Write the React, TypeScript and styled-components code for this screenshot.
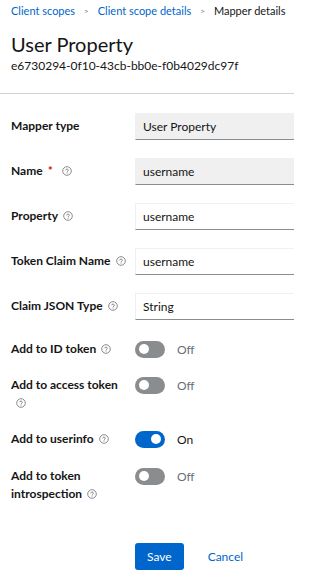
import React from 'react';
import styled, { createGlobalStyle } from 'styled-components';

const GlobalStyle = createGlobalStyle`
  body {
    margin: 0;
    background: #fff;
    font-family: Lato, "Liberation Sans", sans-serif;
    color: #151515;
    overflow: hidden;
  }
`;

const Page = styled.div`
  width: 294px;
  height: 577px;
  overflow: hidden;
`;

const Header = styled.div`
  padding: 3px 11px 19px;
  border-bottom: 1px solid #d2d2d2;
`;

const Breadcrumb = styled.nav`
  display: flex;
  align-items: center;
  gap: 9px;
  font-size: 11px;
  line-height: 16px;
  white-space: nowrap;
`;

const Crumb = styled.a<{ $current?: boolean }>`
  color: ${(p) => (p.$current ? '#151515' : '#0066cc')};
  text-decoration: none;
`;

const Sep = styled.span`
  color: #6a6e73;
  font-size: 8px;
`;

const Title = styled.h1`
  margin: 13px 0 0;
  font-size: 20px;
  font-weight: 400;
  line-height: 24px;
`;

const SubId = styled.div`
  font-size: 12px;
  line-height: 16px;
  margin-top: 2px;
`;

const Form = styled.form`
  padding: 19px 0 0 11px;
  display: flex;
  flex-direction: column;
`;

const Row = styled.div<{ $gap?: number }>`
  display: grid;
  grid-template-columns: 124px 1fr;
  align-items: start;
  margin-bottom: ${(p) => p.$gap ?? 18}px;
`;

const Label = styled.label<{ $top?: number }>`
  font-size: 12px;
  font-weight: 700;
  line-height: 18px;
  padding-top: ${(p) => p.$top ?? 4}px;
  padding-right: 6px;
`;

const Req = styled.span`
  color: #c9190b;
  margin: 0 4px 0 5px;
`;

const Help = styled.span`
  display: inline-flex;
  vertical-align: middle;
  margin-left: 5px;
  margin-top: -2px;
`;

const Input = styled.input<{ $readOnly?: boolean }>`
  box-sizing: border-box;
  width: calc(100% + 12px);
  height: 27px;
  padding: 0 7px;
  font: inherit;
  font-size: 12px;
  color: #151515;
  background: ${(p) => (p.$readOnly ? '#f0f0f0' : '#fff')};
  border: 1px solid #f0f0f0;
  border-bottom-color: #8a8d90;
  outline: none;
`;

const SwitchWrap = styled.div`
  display: flex;
  align-items: center;
  gap: 12px;
  height: 22px;
`;

const Track = styled.span<{ $on: boolean }>`
  position: relative;
  width: 30px;
  height: 17px;
  border-radius: 9px;
  background: ${(p) => (p.$on ? '#0066cc' : '#8a8d90')};
`;

const Knob = styled.span<{ $on: boolean }>`
  position: absolute;
  top: 3.5px;
  left: ${(p) => (p.$on ? '16px' : '4px')};
  width: 10px;
  height: 10px;
  border-radius: 50%;
  background: #fff;
`;

const SwitchText = styled.span<{ $on: boolean }>`
  font-size: 12px;
  color: ${(p) => (p.$on ? '#151515' : '#6a6e73')};
`;

const Actions = styled.div`
  display: flex;
  align-items: center;
  gap: 24px;
  margin-top: 40px;
  padding-left: 124px;
`;

const Primary = styled.button`
  height: 27px;
  padding: 0 12px;
  border: none;
  border-radius: 3px;
  background: #0066cc;
  color: #fff;
  font: inherit;
  font-size: 12px;
`;

const LinkButton = styled.button`
  border: none;
  background: none;
  padding: 0;
  color: #0066cc;
  font: inherit;
  font-size: 12px;
`;

const HelpIcon = () => (
  <Help>
    <svg width="10" height="10" viewBox="0 0 20 20" fill="none" stroke="#6a6e73" strokeWidth="1.6">
      <circle cx="10" cy="10" r="8.6" />
      <path d="M7.4 7.8a2.7 2.7 0 0 1 5.2 0.7c0 1.8-2.6 2.2-2.6 3.8" strokeLinecap="round" />
      <circle cx="10" cy="14.6" r="0.9" fill="#6a6e73" stroke="none" />
    </svg>
  </Help>
);

const Switch = ({ on }: { on: boolean }) => (
  <SwitchWrap>
    <Track $on={on}>
      <Knob $on={on} />
    </Track>
    <SwitchText $on={on}>{on ? 'On' : 'Off'}</SwitchText>
  </SwitchWrap>
);

const App = () => {
  return (
    <Page>
      <GlobalStyle />
      <Header>
        <Breadcrumb>
          <Crumb>Client scopes</Crumb>
          <Sep>&gt;</Sep>
          <Crumb>Client scope details</Crumb>
          <Sep>&gt;</Sep>
          <Crumb $current>Mapper details</Crumb>
        </Breadcrumb>
        <Title>User Property</Title>
        <SubId>e6730294-0f10-43cb-bb0e-f0b4029dc97f</SubId>
      </Header>
      <Form>
        <Row>
          <Label>Mapper type</Label>
          <Input $readOnly readOnly value="User Property" />
        </Row>
        <Row>
          <Label>
            Name<Req>*</Req>
            <HelpIcon />
          </Label>
          <Input $readOnly readOnly value="username" />
        </Row>
        <Row>
          <Label>
            Property
            <HelpIcon />
          </Label>
          <Input readOnly value="username" />
        </Row>
        <Row>
          <Label>
            Token Claim Name
            <HelpIcon />
          </Label>
          <Input readOnly value="username" />
        </Row>
        <Row $gap={18}>
          <Label>
            Claim JSON Type
            <HelpIcon />
          </Label>
          <Input readOnly value="String" />
        </Row>
        <Row $gap={14}>
          <Label $top={2}>
            Add to ID token
            <HelpIcon />
          </Label>
          <Switch on={false} />
        </Row>
        <Row $gap={16}>
          <Label $top={2}>
            Add to access token
            <HelpIcon />
          </Label>
          <Switch on={false} />
        </Row>
        <Row $gap={15}>
          <Label $top={2}>
            Add to userinfo
            <HelpIcon />
          </Label>
          <Switch on />
        </Row>
        <Row $gap={0}>
          <Label $top={2}>
            Add to token introspection
            <HelpIcon />
          </Label>
          <Switch on={false} />
        </Row>
        <Actions>
          <Primary type="button">Save</Primary>
          <LinkButton type="button">Cancel</LinkButton>
        </Actions>
      </Form>
    </Page>
  );
};

export default App;
